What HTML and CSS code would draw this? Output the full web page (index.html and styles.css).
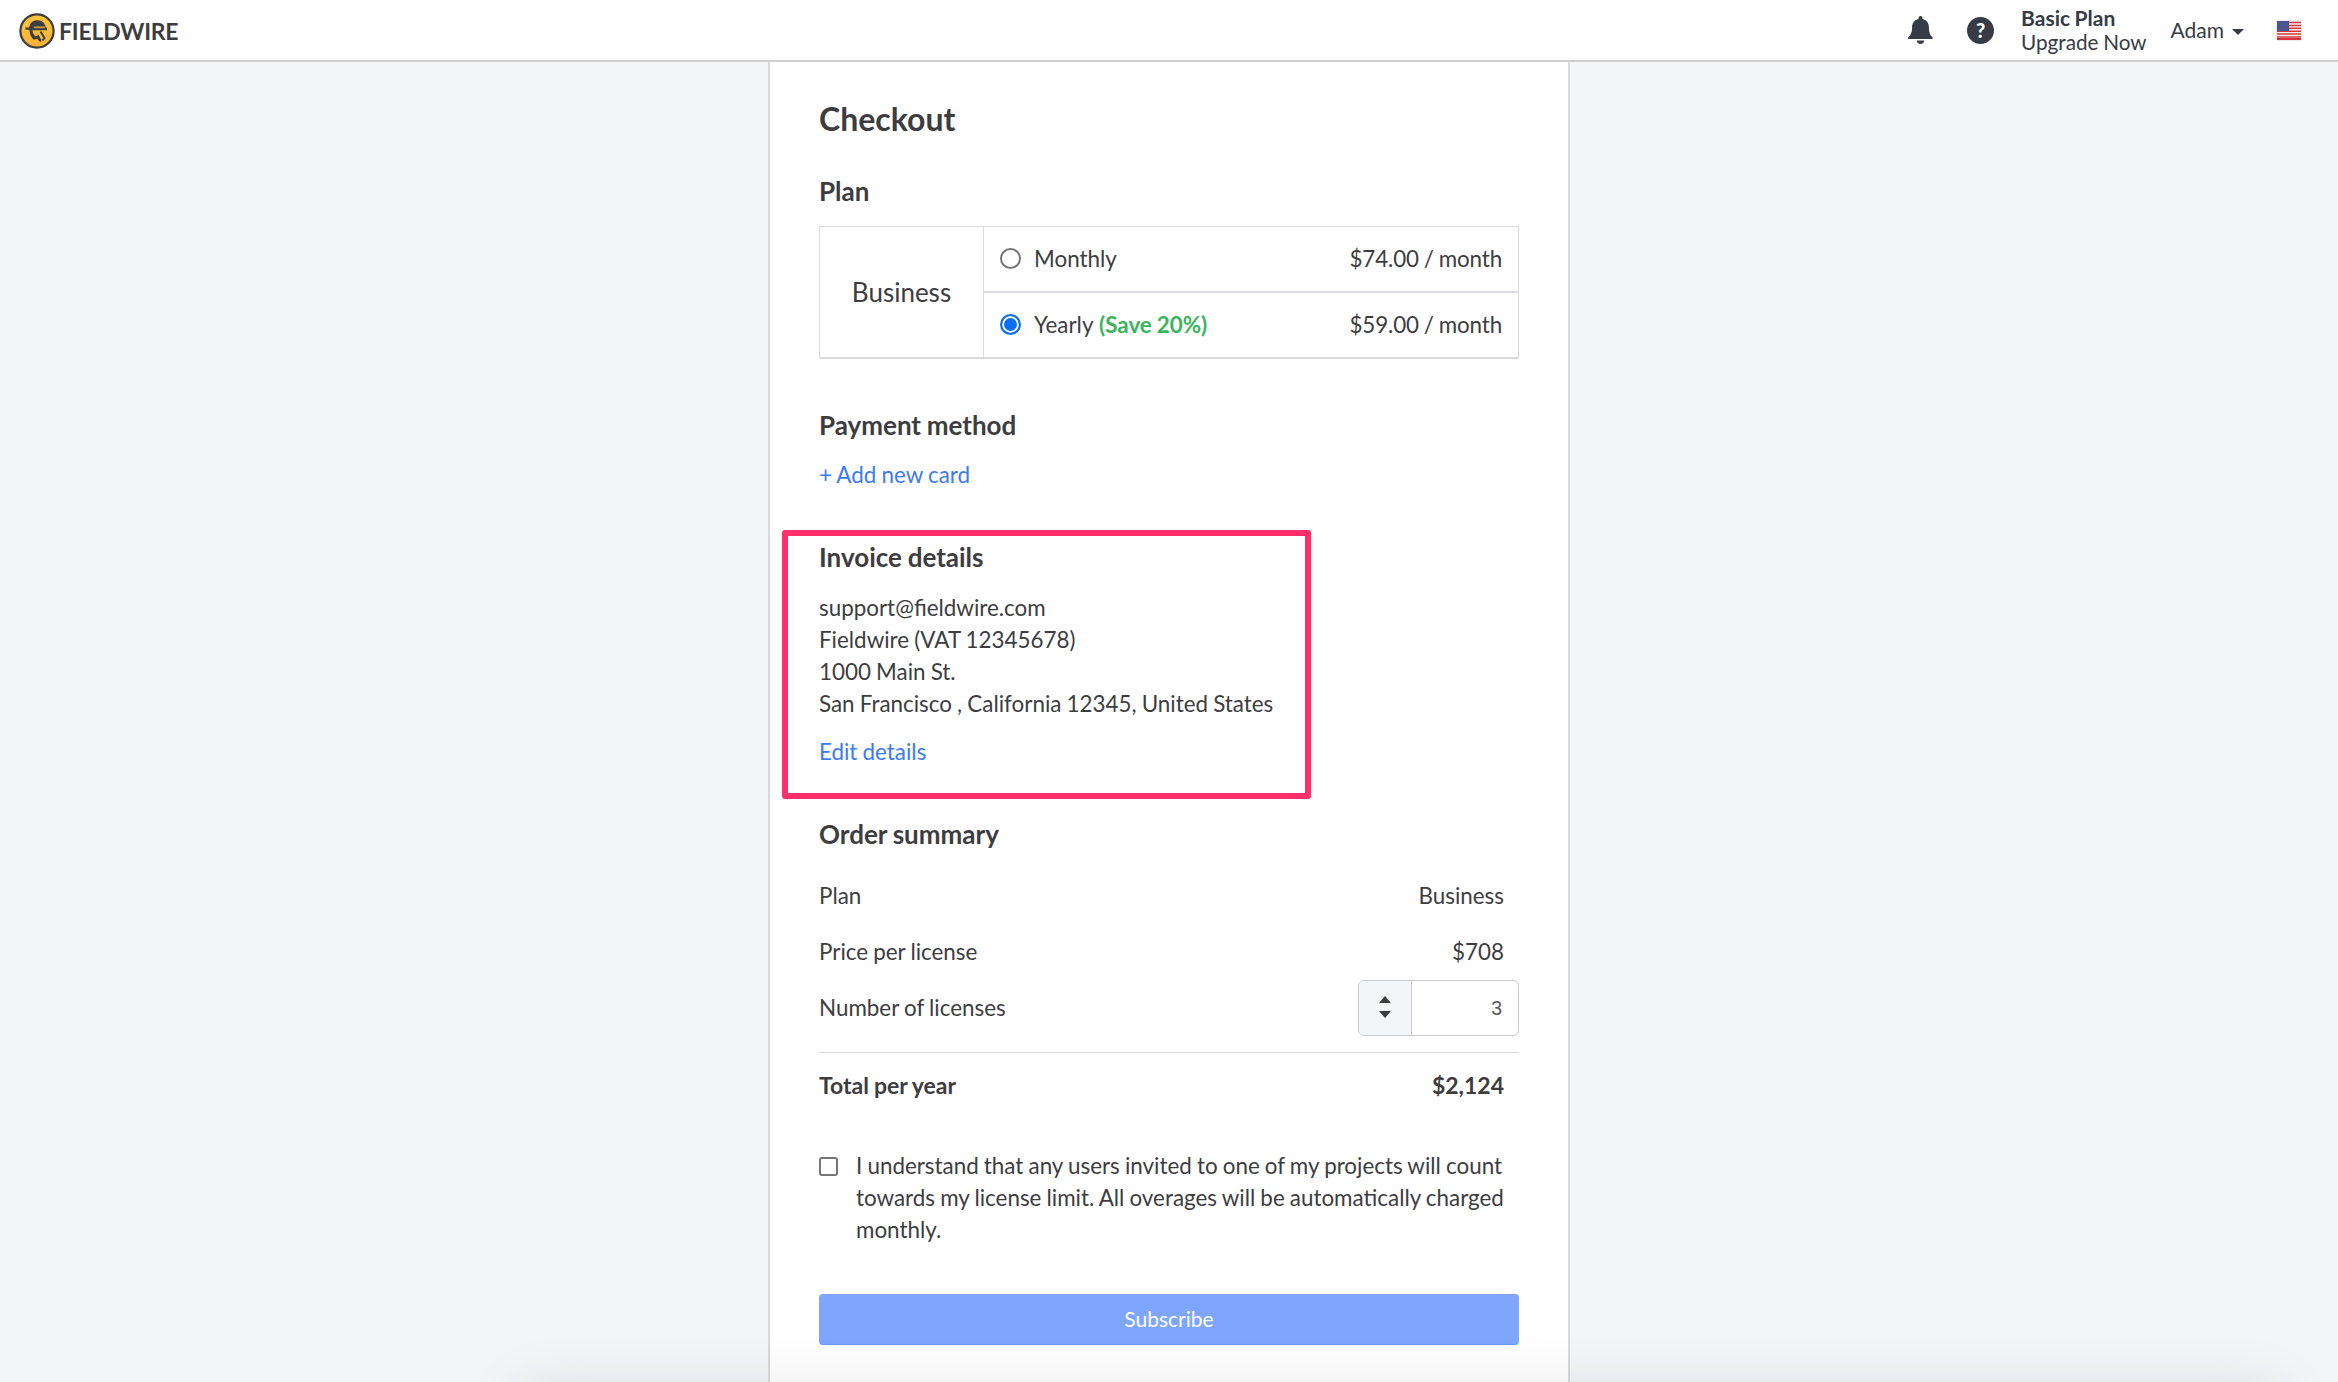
FILE: index.html
```html
<!DOCTYPE html>
<html lang="en">
<head>
<meta charset="utf-8">
<title>Fieldwire Checkout</title>
<link rel="stylesheet" href="styles.css">
</head>
<body>
<header class="topbar">
  <div class="brand">
    <svg class="logo" viewBox="0 0 36 36" width="36" height="36">
      <defs><linearGradient id="lg" x1="0" y1="0" x2="0" y2="1"><stop offset="0" stop-color="#fcc43c"/><stop offset="1" stop-color="#f9b233"/></linearGradient></defs>
      <circle cx="18" cy="18" r="16.6" fill="url(#lg)" stroke="#3a3d42" stroke-width="2.2"/>
      <path d="M6.500 14.600h3.700C10.800 9.800 14 7.200 18.400 7.200c4.600 0 7.800 3 8.400 7.400l1.200 0v2.600H13.400c.2 2.600 1.400 5 3.400 6.200l2.600-1.600 3 5.200-1 2.200-3.400-3.400-3 1c-2.600-1.800-4.200-5-4.600-10.100H6.500z" fill="#3a3d42"/>
      <rect x="15" y="13.400" width="11" height="1.800" fill="#c79a3a"/>
      <path d="M21.500 18.500l4 6.500-2 2.500" fill="none" stroke="#3a3d42" stroke-width="2"/>
    </svg>
    <span class="wordmark">FIELDWIRE</span>
  </div>
  <nav class="tools">
    <svg class="bell" viewBox="0 0 25 28" width="25" height="28"><path d="M12.500 0c1.200 0 2 .9 2 2v1c3.900.8 6.400 4 6.400 8 0 6 1.400 8.200 3.600 10.300.4.400.5 1.700-.8 1.700H1.300C0 23-.1 21.700.3 21.300 2.500 19.200 4.100 17 4.100 11c0-4 2.500-7.200 6.400-8V2c0-1.100.8-2 2-2z" fill="#363b45"/><path d="M8.800 24.500h7.400c0 2-1.600 3.500-3.700 3.500s-3.700-1.500-3.700-3.500z" fill="#363b45"/></svg>
    <span class="help">?</span>
    <div class="plan-status"><strong>Basic Plan</strong><span>Upgrade Now</span></div>
    <div class="user">Adam<i class="caret"></i></div>
    <svg class="flag" viewBox="0 0 24 19" width="24" height="19">
      <rect width="24" height="19" fill="#f4f4f6"/>
      <path d="M0 1.500h24M0 4.400h24M0 7.300h24M0 10.200h24M0 13.100h24M0 16h24" stroke="#d8343f" stroke-width="1.500"/>
      <rect y="17" width="24" height="2" fill="#d8343f"/>
      <rect width="12" height="10" fill="#4a5590"/>
    </svg>
  </nav>
</header>

<main class="panel">
  <h1>Checkout</h1>

  <h2 class="h-plan">Plan</h2>
  <div class="plan-table">
    <div class="plan-name">Business</div>
    <div class="plan-options">
      <label class="option"><span class="radio"></span><span class="opt-label">Monthly</span><span class="price">$74.00 / month</span></label>
      <label class="option"><span class="radio on"></span><span class="opt-label">Yearly <b class="save">(Save 20%)</b></span><span class="price">$59.00 / month</span></label>
    </div>
  </div>

  <h2 class="h-pay">Payment method</h2>
  <a class="link add-card">+ Add new card</a>

  <h2 class="h-invoice">Invoice details</h2>
  <address class="invoice">
    support@fieldwire.com<br>
    Fieldwire (VAT 12345678)<br>
    1000 Main St.<br>
    San Francisco , California 12345, United States
  </address>
  <a class="link edit">Edit details</a>

  <h2 class="h-order">Order summary</h2>
  <div class="row r-plan"><span>Plan</span><span class="val">Business</span></div>
  <div class="row r-price"><span>Price per license</span><span class="val">$708</span></div>
  <div class="row r-num">
    <span>Number of licenses</span>
    <div class="stepper">
      <span class="arrows"><i class="up"></i><i class="down"></i></span>
      <span class="qty">3</span>
    </div>
  </div>
  <div class="row total"><span>Total per year</span><span class="val">$2,124</span></div>

  <label class="agree">
    <span class="check"></span>
    <span>I understand that any users invited to one of my projects will count towards my license limit. All overages will be automatically charged monthly.</span>
  </label>

  <button class="subscribe" type="button">Subscribe</button>
</main>

<div class="highlight"></div>
<div class="bottom-glow"></div>
</body>
</html>
```

FILE: styles.css
```css
* { box-sizing: border-box; }
html, body { height: 100%; }
body {
  margin: 0;
  height: 1382px;
  overflow: hidden;
  position: relative;
  background: #f4f5f7;
  font-family: Lato, "Liberation Sans", sans-serif;
  font-size: 22.4px;
  word-spacing: -0.6px;
  line-height: 32px;
  color: #3d3d3f;
}
.topbar {
  height: 62px;
  background: #fff;
  border-bottom: 2px solid #cfcfcf;
  display: flex;
  justify-content: space-between;
  align-items: center;
  padding: 0 37px 0 19px;
}
.brand { display: flex; align-items: center; gap: 4px; margin-top: 1px; }
.logo { display: block; }
.wordmark { font-size: 23px; font-weight: 700; color: #3d3d3f; letter-spacing: -0.2px; }
.tools { display: flex; align-items: center; color: #363b45; }
.bell { display: block; margin-right: 34px; }
.help {
  width: 27px; height: 27px; border-radius: 50%;
  background: #363b45; color: #fff;
  font-size: 20px; font-weight: 900; line-height: 27px; text-align: center;
  margin-right: 27px;
}
.plan-status { display: flex; flex-direction: column; font-size: 20.7px; line-height: 24px; margin-right: 24px; }
.plan-status strong { font-weight: 700; font-size: 21px; }
.user { display: flex; align-items: center; font-size: 21px; margin-right: 33px; }
.caret {
  width: 0; height: 0; margin-left: 8px; margin-top: 3px;
  border-left: 6px solid transparent; border-right: 6px solid transparent; border-top: 6px solid #363b45;
}
.flag { display: block; box-shadow: 0 0 2px rgba(0,0,0,.25); }

.panel {
  width: 802px;
  height: 1400px;
  margin: 0 auto;
  background: #fff;
  border-left: 2px solid #d9dadd;
  border-right: 2px solid #d9dadd;
  padding: 0 49px;
}
h1 { margin: 0; padding-top: 37px; font-size: 32px; line-height: 40px; font-weight: 700; color: #3d3d3f; }
h2 { margin: 0; font-size: 26px; line-height: 32px; font-weight: 700; color: #3d3d3f; }
.h-plan { margin-top: 36px; }
.plan-table {
  margin-top: 19px;
  display: flex;
  height: 133px;
  border: 1px solid #d9dadd;
  border-bottom-width: 2px;
}
.plan-name {
  width: 164px;
  border-right: 1px solid #d9dadd;
  display: flex; align-items: center; justify-content: center;
  font-size: 26px;
}
.plan-options { flex: 1; display: flex; flex-direction: column; }
.option {
  flex: 1;
  display: flex; align-items: center;
  padding: 0 16px;
}
.option:first-child { border-bottom: 2px solid #d9dadd; }
.radio {
  width: 21px; height: 21px; border-radius: 50%;
  border: 2px solid #767676; background: #fff;
  margin: -1px 13px 0 0;
}
.radio.on { border-color: #0b6ef5; background: #0b6ef5; box-shadow: inset 0 0 0 2px #fff; }
.opt-label { flex: 1; }
.price { letter-spacing: -0.15px; }
.save { color: #3ab55c; font-weight: 700; margin-left: 1px; }
.h-pay { margin-top: 50px; }
.link { display: block; color: #3b7bf6; }
.add-card { margin-top: 18px; }
.h-invoice { margin-top: 50px; }
.invoice { margin-top: 19px; font-style: normal; }
.edit { margin-top: 16px; }
.h-order { margin-top: 50px; }
.row {
  display: flex; justify-content: space-between; align-items: center;
  padding-right: 15px;
}
.r-plan { margin-top: 30px; }
.r-price { margin-top: 24px; }
.r-num { margin-top: 12px; padding-right: 0; height: 56px; }
.stepper {
  width: 161px; height: 56px;
  display: flex;
  border: 1px solid #c9cacd;
  border-radius: 6px;
  overflow: hidden;
}
.arrows {
  width: 53px; background: #f4f5f7;
  border-right: 1px solid #c9cacd;
  display: flex; flex-direction: column; align-items: center; justify-content: center; gap: 8px;
  padding-bottom: 2px;
}
.up, .down { width: 0; height: 0; border-left: 6px solid transparent; border-right: 6px solid transparent; }
.up { border-bottom: 7px solid #3d3d3f; }
.down { border-top: 7px solid #3d3d3f; }
.qty {
  flex: 1; text-align: right; padding-right: 16px;
  font-family: "Liberation Sans", sans-serif; font-size: 19.500px; line-height: 54px; color: #55565a;
}
.total {
  margin-top: 16px;
  border-top: 1px solid #d9dadd;
  padding-top: 16px;
  font-weight: 700;
  font-size: 23px;
}
.agree { display: flex; margin-top: 49px; }
.check {
  flex: none;
  width: 19px; height: 19px;
  margin: 7px 18px 0 0;
  border: 2px solid #767676;
  border-radius: 3px;
  background: #fff;
}
.subscribe {
  display: block;
  width: 100%;
  height: 51px;
  margin-top: 48px;
  padding: 0;
  background: #7ea6ff;
  border: 0;
  border-bottom: 1px solid #6d96f8;
  border-radius: 4px;
  color: #fff;
  font: 400 21px/50px Lato, "Liberation Sans", sans-serif;
}
.highlight {
  position: absolute;
  left: 782px; top: 530px;
  width: 529px; height: 269px;
  border: 6px solid #ff2f6e;
  border-radius: 3px;
  pointer-events: none;
}
.bottom-glow {
  position: absolute;
  left: 530px; top: 1402px;
  width: 1740px; height: 40px;
  box-shadow: 0 0 60px 10px rgba(40,45,60,.14);
  pointer-events: none;
}
```
